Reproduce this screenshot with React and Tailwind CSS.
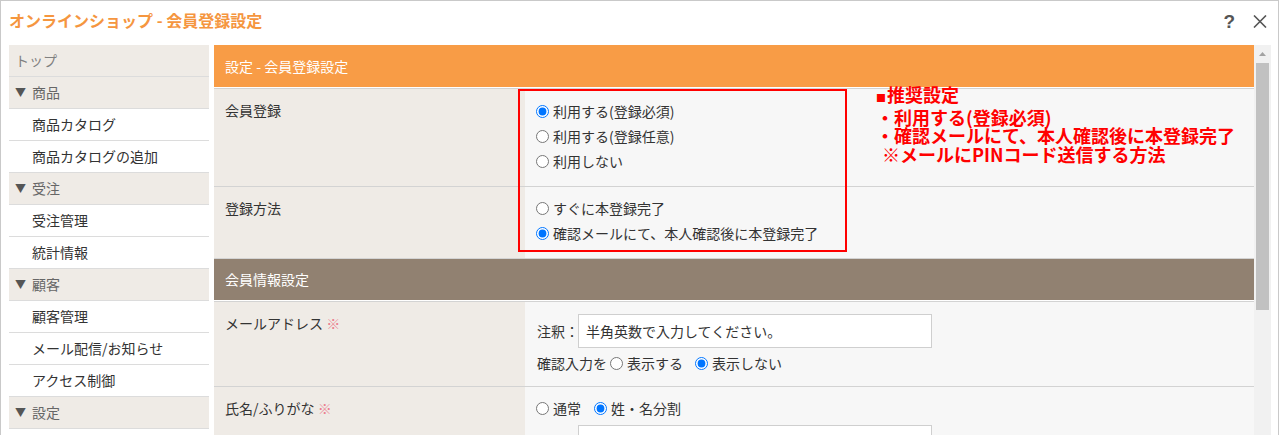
import React from "react";

const side = [
  { t: "トップ", h: true, top: true },
  { t: "商品", h: true, arrow: true },
  { t: "商品カタログ" },
  { t: "商品カタログの追加" },
  { t: "受注", h: true, arrow: true },
  { t: "受注管理" },
  { t: "統計情報" },
  { t: "顧客", h: true, arrow: true },
  { t: "顧客管理" },
  { t: "メール配信/お知らせ" },
  { t: "アクセス制御" },
  { t: "設定", h: true, arrow: true },
];

function Radio({ checked, label, className }) {
  return (
    <label className={"flex items-center h-[25px] whitespace-nowrap " + (className || "")}>
      <input
        type="radio"
        defaultChecked={checked}
        className="m-0 mr-[4px] w-[13px] h-[13px] shrink-0"
      />
      <span>{label}</span>
    </label>
  );
}

function Label({ children, req }) {
  return (
    <div className="w-[311px] shrink-0 bg-[#efebe6] pl-[11px] pt-[9px] leading-6 whitespace-nowrap">
      {children}
      {req && <span className="text-[#ec7e8e]"> ※</span>}
    </div>
  );
}

export default function App() {
  return (
    <div className="w-[1279px] h-[435px] overflow-hidden bg-white border border-b-0 border-[#c9c9c9] flex flex-col font-['Noto_Sans_CJK_JP','Noto_Sans',sans-serif] text-[#333] text-[14px]">
      {/* title bar */}
      <div className="h-[44px] shrink-0 flex items-center pl-[8px] pr-[11px] pb-[6px]">
        <div className="text-[16px] font-bold text-[#f5963f] leading-none whitespace-nowrap">
          オンラインショップ - 会員登録設定
        </div>
        <div className="ml-auto flex items-center gap-[18px] mt-[3px]">
          <span className="font-['Liberation_Sans',sans-serif] text-[19px] font-bold text-[#555] leading-none">
            ?
          </span>
          <svg width="14" height="13" viewBox="0 0 14 13">
            <path d="M1 0.5 L13 12.5 M13 0.5 L1 12.5" stroke="#555" strokeWidth="1.6" fill="none" />
          </svg>
        </div>
      </div>

      {/* body */}
      <div className="flex flex-1 min-h-0 pl-[8px] pr-[7px]">
        {/* sidebar */}
        <aside className="w-[200px] shrink-0 flex flex-col">
          {side.map((s, i) => (
            <div
              key={i}
              className={
                s.h
                  ? "h-[32px] shrink-0 flex items-center border-b border-[#dcdcdc] bg-[#efebe6] pl-[6px] whitespace-nowrap " +
                    (s.top ? "text-[#808080]" : "text-[#666]")
                  : "h-[32px] shrink-0 flex items-center border-b border-[#dcdcdc] bg-white pl-[23px] text-[#333] whitespace-nowrap"
              }
            >
              {s.arrow && <span className="text-[11px] mr-[6px] text-[#555]">▼</span>}
              {s.t}
            </div>
          ))}
        </aside>

        {/* main */}
        <div className="ml-[5px] w-[1040px] shrink-0 relative overflow-hidden bg-[#f7f7f7]">
          <div className="h-[43px] bg-[#f89c46] text-white flex items-center pl-[11px] border-b border-white">
            設定 - 会員登録設定
          </div>

          <div className="flex border-t border-b border-[#d3d3d3]">
            <Label>会員登録</Label>
            <div className="flex-1 pl-[11px] pt-[10px] pb-[12px]">
              <Radio checked label="利用する(登録必須)" />
              <Radio label="利用する(登録任意)" />
              <Radio label="利用しない" />
            </div>
          </div>

          <div className="flex border-b border-[#d3d3d3]">
            <Label>登録方法</Label>
            <div className="flex-1 pl-[11px] pt-[9px] pb-[12px]">
              <Radio label="すぐに本登録完了" />
              <Radio checked label="確認メールにて、本人確認後に本登録完了" />
            </div>
          </div>

          <div className="h-[42px] bg-[#918171] text-white flex items-center pl-[11px] border-b border-white">
            会員情報設定
          </div>

          <div className="flex border-t border-b border-[#d3d3d3]">
            <Label req>メールアドレス</Label>
            <div className="flex-1 pl-[12px] pt-[12px] pb-[10px]">
              <div className="flex items-center">
                <span className="w-[41px] shrink-0 whitespace-nowrap">注釈：</span>
                <div className="w-[354px] h-[34px] bg-white border border-[#cfcfcf] flex items-center pl-[7px] whitespace-nowrap">
                  半角英数で入力してください。
                </div>
              </div>
              <div className="flex items-center h-[25px] mt-[3px] whitespace-nowrap">
                <span className="mr-[3px]">確認入力を</span>
                <Radio label="表示する" />
                <Radio checked label="表示しない" className="ml-[12px]" />
              </div>
            </div>
          </div>

          <div className="flex">
            <Label req>氏名/ふりがな</Label>
            <div className="flex-1 pl-[11px] pt-[9px]">
              <div className="flex items-center">
                <Radio label="通常" />
                <Radio checked label="姓・名分割" className="ml-[13px]" />
              </div>
              <div className="ml-[42px] mt-[4px] w-[354px] h-[34px] bg-white border border-[#cfcfcf]" />
            </div>
          </div>

          {/* annotation overlay */}
          <div className="absolute left-[304px] top-[44px] w-[329px] h-[163px] border-2 border-[#ff0000] pointer-events-none" />
          <div className="absolute left-[662px] top-[40px] text-[#ff0000] font-bold text-[18px] leading-[18.5px] whitespace-nowrap pointer-events-none">
            <div>
              <span className="text-[10px] mr-[1px]">■</span>推奨設定
            </div>
            <div>・利用する(登録必須)</div>
            <div>・確認メールにて、本人確認後に本登録完了</div>
            <div className="pl-[6px]">※メールにPINコード送信する方法</div>
          </div>
        </div>

        {/* scrollbar */}
        <div className="w-[17px] shrink-0 bg-[#f1f1f1] flex flex-col items-center">
          <div className="h-[18px] w-full flex items-center justify-center">
            <svg width="7" height="4" viewBox="0 0 7 4">
              <polygon points="3.5,0 7,4 0,4" fill="#a3a3a3" />
            </svg>
          </div>
          <div className="w-[13px] h-[247px] bg-[#c1c1c1]" />
        </div>
      </div>
    </div>
  );
}
